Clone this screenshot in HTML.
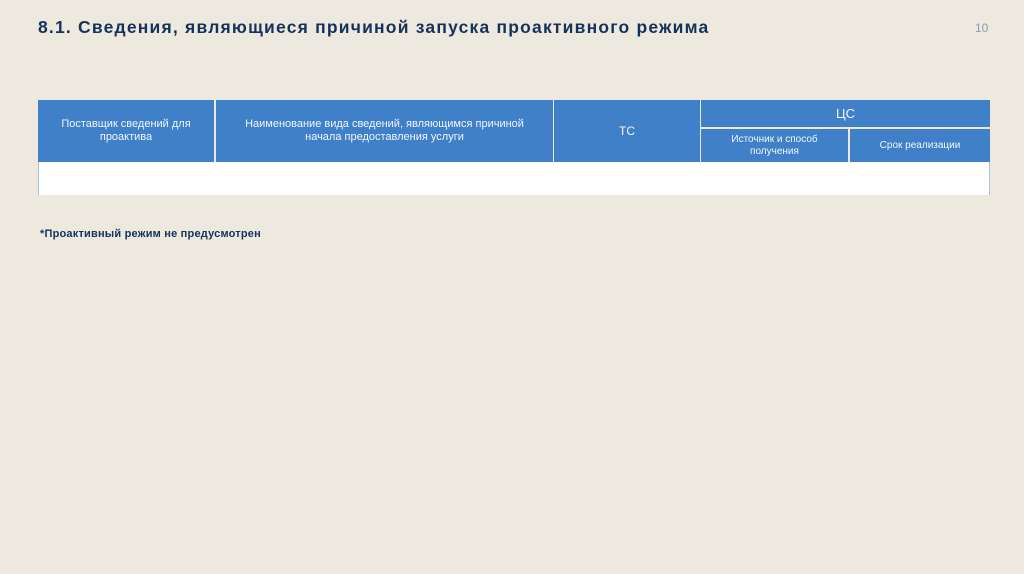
<!DOCTYPE html>
<html><head><meta charset="utf-8"><style>
body{margin:0;width:1024px;height:574px;background:#ede9df;position:relative;overflow:hidden;font-family:"Liberation Sans","DejaVu Sans",sans-serif}
.t{position:absolute;left:38px;top:17px;font-size:17.5px;font-weight:bold;color:#14325c;letter-spacing:1.2px}
.n{position:absolute;left:975px;top:21px;font-size:12px;color:#8a9bb5}
.c{position:absolute;background:#3f80c9;color:#f2f6fb;display:flex;align-items:center;justify-content:center;text-align:center;font-size:11px;line-height:13px;box-sizing:border-box}
.w{position:absolute;left:38px;top:162px;width:952px;height:33px;background:#fff;border-left:1px solid #a9c0dc;border-right:1px solid #a9c0dc;box-sizing:border-box}
.f{position:absolute;left:40px;top:228px;font-size:11px;font-weight:bold;color:#14325c;letter-spacing:0.2px}
</style></head><body>
<div class="t">8.1. Сведения, являющиеся причиной запуска проактивного режима</div>
<div class="n">10</div>
<div class="c" style="left:38px;top:100px;width:176px;height:62px">Поставщик сведений для<br>проактива</div>
<div class="c" style="left:216px;top:100px;width:337px;height:62px">Наименование вида сведений, являющимся причиной<br>начала предоставления услуги</div>
<div class="c" style="left:554px;top:100px;width:146px;height:62px;font-size:12px">ТС</div>
<div class="c" style="left:701px;top:100px;width:289px;height:27px;font-size:13px">ЦС</div>
<div class="c" style="left:701px;top:129px;width:147px;height:33px;font-size:10px;line-height:12px">Источник и способ<br>получения</div>
<div class="c" style="left:850px;top:129px;width:140px;height:33px;font-size:10px">Срок реализации</div>
<div class="w"></div>
<div class="f">*Проактивный режим не предусмотрен</div>
</body></html>
